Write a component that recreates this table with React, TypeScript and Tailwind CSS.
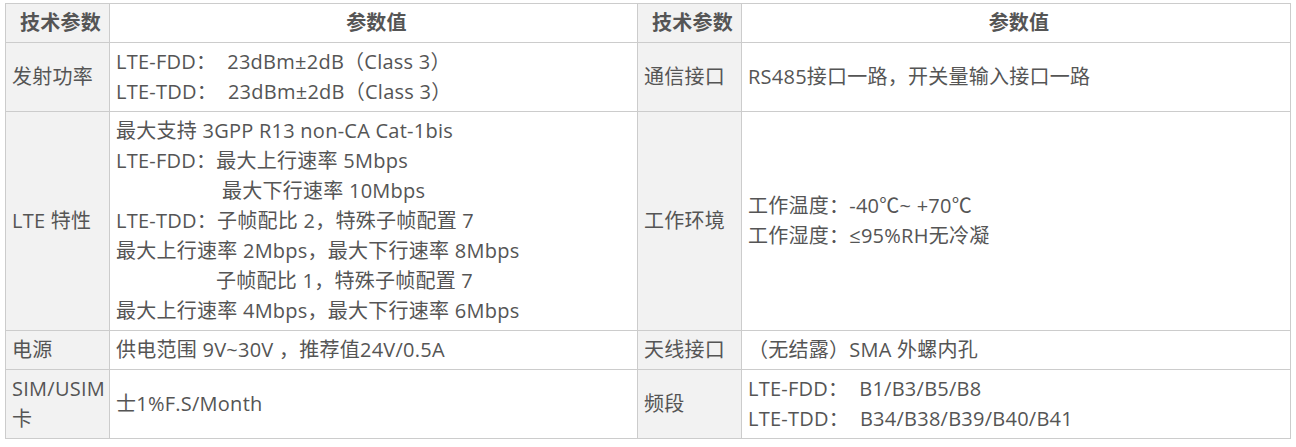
import React from "react";

type Row = {
  k1: string;
  v1: React.ReactNode;
  k2: string;
  v2: React.ReactNode;
};

const sp = "\u00a0\u00a0";

const rows: Row[] = [
  {
    k1: "发射功率",
    v1: (
      <>
        <div>LTE-FDD：{sp}23dBm±2dB（Class 3）</div>
        <div>LTE-TDD：{sp}23dBm±2dB（Class 3）</div>
      </>
    ),
    k2: "通信接口",
    v2: <div>RS485接口一路，开关量输入接口一路</div>,
  },
  {
    k1: "LTE 特性",
    v1: (
      <>
        <div>最大支持 3GPP R13 non-CA Cat-1bis</div>
        <div>LTE-FDD：最大上行速率 5Mbps</div>
        <div className="pl-[106px]">最大下行速率 10Mbps</div>
        <div>LTE-TDD：子帧配比 2，特殊子帧配置 7</div>
        <div>最大上行速率 2Mbps，最大下行速率 8Mbps</div>
        <div className="pl-[100px]">子帧配比 1，特殊子帧配置 7</div>
        <div>最大上行速率 4Mbps，最大下行速率 6Mbps</div>
      </>
    ),
    k2: "工作环境",
    v2: (
      <>
        <div>工作温度：-40℃~ +70℃</div>
        <div>工作湿度：≤95%RH无冷凝</div>
      </>
    ),
  },
  {
    k1: "电源",
    v1: <div>供电范围 9V~30V ，推荐值24V/0.5A</div>,
    k2: "天线接口",
    v2: <div>（无结露）SMA 外螺内孔</div>,
  },
  {
    k1: "SIM/USIM卡",
    v1: <div>士1%F.S/Month</div>,
    k2: "频段",
    v2: (
      <>
        <div>LTE-FDD：{sp}B1/B3/B5/B8</div>
        <div>LTE-TDD：{sp}B34/B38/B39/B40/B41</div>
      </>
    ),
  },
];

const cell = "border border-[#cccccc] pl-[6px] pr-0 py-[4px] align-middle";
const keyCell = `${cell} bg-[#f2f2f2]`;

export default function App() {
  return (
    <div className="bg-white min-h-[447px] pt-[3px] pl-[5px]">
      <table
        className="table-fixed border-collapse w-[1285px] text-[20px] leading-[30px] tracking-[0.25px] text-[#555555]"
        style={{ fontFamily: '"Open Sans", "Noto Sans CJK SC", sans-serif' }}
      >
        <colgroup>
          <col className="w-[104px]" />
          <col className="w-[528px]" />
          <col className="w-[104px]" />
          <col className="w-[549px]" />
        </colgroup>
        <thead>
          <tr className="font-bold">
            <th className={`${keyCell} text-center`}>技术参数</th>
            <th className={`${cell} text-center`}>参数值</th>
            <th className={`${keyCell} text-center`}>技术参数</th>
            <th className={`${cell} text-center`}>参数值</th>
          </tr>
        </thead>
        <tbody>
          {rows.map((r, i) => (
            <tr key={i}>
              <td className={keyCell}>{r.k1}</td>
              <td className={cell}>{r.v1}</td>
              <td className={keyCell}>{r.k2}</td>
              <td className={cell}>{r.v2}</td>
            </tr>
          ))}
        </tbody>
      </table>
    </div>
  );
}
